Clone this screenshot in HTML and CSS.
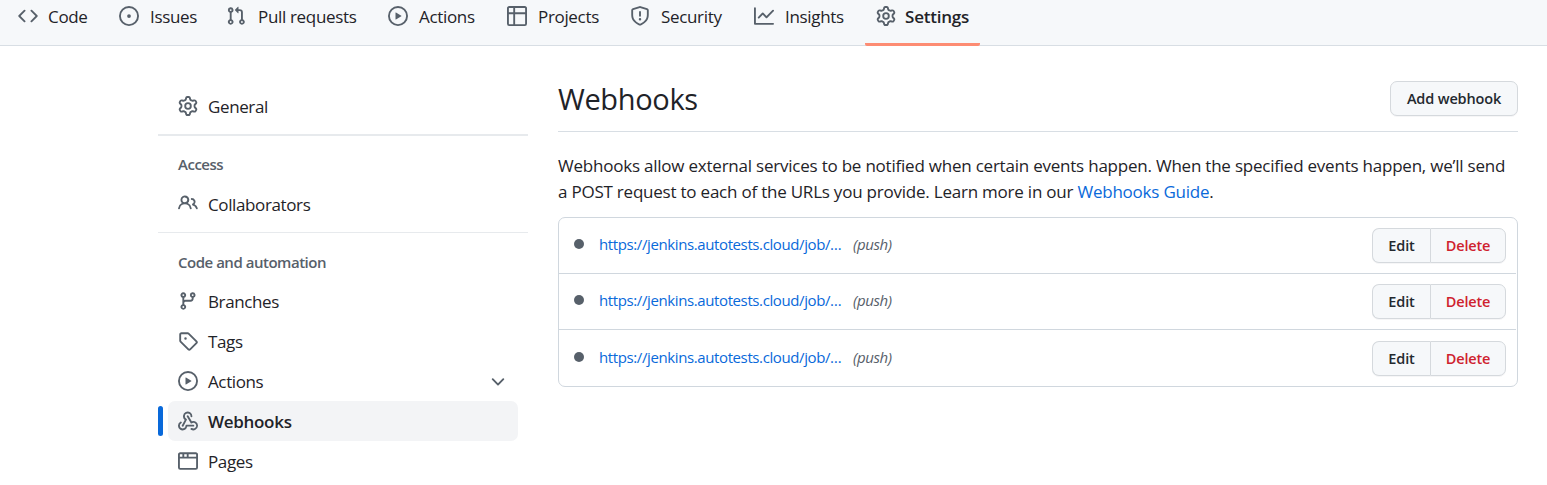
FILE: index.html
```html
<!DOCTYPE html>
<html lang="en">
<head>
<meta charset="utf-8">
<title>Webhooks</title>
<link rel="stylesheet" href="styles.css">
</head>
<body>
<svg class="sprite" aria-hidden="true">
  <symbol id="code" viewBox="0 0 16 16"><path d="m11.28 3.22 4.25 4.25a.75.75 0 0 1 0 1.06l-4.25 4.25a.749.749 0 0 1-1.275-.326.749.749 0 0 1 .215-.734L13.94 8l-3.72-3.72a.749.749 0 0 1 .326-1.275.749.749 0 0 1 .734.215Zm-6.56 0a.751.751 0 0 1 1.042.018.751.751 0 0 1 .018 1.042L2.06 8l3.72 3.72a.749.749 0 0 1-.326 1.275.749.749 0 0 1-.734-.215L.47 8.53a.75.75 0 0 1 0-1.06Z"/></symbol>
  <symbol id="issue" viewBox="0 0 16 16"><path d="M8 9.5a1.5 1.5 0 1 0 0-3 1.5 1.5 0 0 0 0 3Z"/><path d="M8 0a8 8 0 1 1 0 16A8 8 0 0 1 8 0ZM1.5 8a6.5 6.5 0 1 0 13 0 6.5 6.5 0 0 0-13 0Z"/></symbol>
  <symbol id="pull" viewBox="0 0 16 16"><path d="M1.5 3.25a2.25 2.25 0 1 1 3 2.122v5.256a2.251 2.251 0 1 1-1.5 0V5.372A2.25 2.25 0 0 1 1.5 3.25Zm5.677-.177L9.573.677A.25.25 0 0 1 10 .854V2.5h1A2.5 2.5 0 0 1 13.5 5v5.628a2.251 2.251 0 1 1-1.5 0V5a1 1 0 0 0-1-1h-1v1.646a.25.25 0 0 1-.427.177L7.177 3.427a.25.25 0 0 1 0-.354ZM3.75 2.5a.75.75 0 1 0 0 1.5.75.75 0 0 0 0-1.5Zm0 9.5a.75.75 0 1 0 0 1.5.75.75 0 0 0 0-1.5Zm8.25.75a.75.75 0 1 0 1.5 0 .75.75 0 0 0-1.5 0Z"/></symbol>
  <symbol id="play" viewBox="0 0 16 16"><path d="M8 0a8 8 0 1 1 0 16A8 8 0 0 1 8 0ZM1.5 8a6.5 6.5 0 1 0 13 0 6.5 6.5 0 0 0-13 0Zm4.879-2.773 4.264 2.559a.25.25 0 0 1 0 .428l-4.264 2.559A.25.25 0 0 1 6 10.559V5.442a.25.25 0 0 1 .379-.215Z"/></symbol>
  <symbol id="table" viewBox="0 0 16 16"><path d="M0 1.75C0 .784.784 0 1.75 0h12.5C15.216 0 16 .784 16 1.75v12.5A1.75 1.75 0 0 1 14.25 16H1.75A1.75 1.75 0 0 1 0 14.25ZM6.5 6.5v8h7.75a.25.25 0 0 0 .25-.25V6.5Zm8-1.5V1.75a.25.25 0 0 0-.25-.25H6.5V5Zm-13 1.5v7.75c0 .138.112.25.25.25H5v-8ZM5 5V1.5H1.75a.25.25 0 0 0-.25.25V5Z"/></symbol>
  <symbol id="shield" viewBox="0 0 16 16"><path d="M7.467.133a1.748 1.748 0 0 1 1.066 0l5.25 1.68A1.75 1.75 0 0 1 15 3.48V7c0 1.566-.32 3.182-1.303 4.682-.983 1.498-2.585 2.813-5.032 3.855a1.697 1.697 0 0 1-1.33 0c-2.447-1.042-4.049-2.357-5.032-3.855C1.32 10.182 1 8.566 1 7V3.48a1.75 1.75 0 0 1 1.217-1.667Zm.61 1.429a.25.25 0 0 0-.153 0l-5.25 1.68a.25.25 0 0 0-.174.238V7c0 1.358.275 2.666 1.057 3.86.784 1.194 2.121 2.34 4.366 3.297a.196.196 0 0 0 .154 0c2.245-.956 3.582-2.104 4.366-3.298C13.225 9.666 13.5 8.36 13.5 7V3.48a.251.251 0 0 0-.174-.237l-5.25-1.68ZM8.75 4.75v3a.75.75 0 0 1-1.5 0v-3a.75.75 0 0 1 1.5 0ZM9 10.5a1 1 0 1 1-2 0 1 1 0 0 1 2 0Z"/></symbol>
  <symbol id="graph" viewBox="0 0 16 16"><path d="M1.5 1.75V13.5h13.75a.75.75 0 0 1 0 1.5H.75a.75.75 0 0 1-.75-.75V1.75a.75.75 0 0 1 1.5 0Zm14.28 2.53-5.25 5.25a.75.75 0 0 1-1.06 0L7 7.06 4.28 9.78a.751.751 0 0 1-1.042-.018.751.751 0 0 1-.018-1.042l3.25-3.25a.75.75 0 0 1 1.06 0L10 7.94l4.72-4.72a.751.751 0 0 1 1.042.018.751.751 0 0 1 .018 1.042Z"/></symbol>
  <symbol id="gear" viewBox="0 0 16 16"><path d="M8 0a8.2 8.2 0 0 1 .701.031C9.444.095 9.99.645 10.16 1.29l.288 1.107c.018.066.079.158.212.224.231.114.454.243.668.386.123.082.233.09.299.071l1.103-.303c.644-.176 1.392.021 1.82.63.27.385.506.792.704 1.218.315.675.111 1.422-.364 1.891l-.814.806c-.049.048-.098.147-.088.294.016.257.016.515 0 .772-.01.147.038.246.088.294l.814.806c.475.469.679 1.216.364 1.891a7.977 7.977 0 0 1-.704 1.217c-.428.61-1.176.807-1.82.63l-1.102-.302c-.067-.019-.177-.011-.3.071a5.909 5.909 0 0 1-.668.386c-.133.066-.194.158-.211.224l-.29 1.106c-.168.646-.715 1.196-1.458 1.26a8.006 8.006 0 0 1-1.402 0c-.743-.064-1.289-.614-1.458-1.26l-.289-1.106c-.018-.066-.079-.158-.212-.224a5.738 5.738 0 0 1-.668-.386c-.123-.082-.233-.09-.299-.071l-1.103.303c-.644.176-1.392-.021-1.82-.63a8.12 8.12 0 0 1-.704-1.218c-.315-.675-.111-1.422.363-1.891l.815-.806c.05-.048.098-.147.088-.294a6.214 6.214 0 0 1 0-.772c.01-.147-.038-.246-.088-.294l-.815-.806C.635 6.045.431 5.298.746 4.623a7.92 7.92 0 0 1 .704-1.217c.428-.61 1.176-.807 1.82-.63l1.102.302c.067.019.177.011.3-.071.214-.143.437-.272.668-.386.133-.066.194-.158.211-.224l.29-1.106C6.009.645 6.556.095 7.299.03 7.53.01 7.764 0 8 0Zm-.571 1.525c-.036.003-.108.036-.137.146l-.289 1.105c-.147.561-.549.967-.998 1.189-.173.086-.34.183-.5.29-.417.278-.97.423-1.529.27l-1.103-.303c-.109-.03-.175.016-.195.045-.22.312-.412.644-.573.99-.014.031-.021.11.059.19l.815.806c.411.406.562.957.53 1.456a4.709 4.709 0 0 0 0 .582c.032.499-.119 1.05-.53 1.456l-.815.806c-.081.08-.073.159-.059.19.162.346.353.677.573.989.02.03.085.076.195.046l1.102-.303c.56-.153 1.113-.008 1.53.27.161.107.328.204.501.29.447.222.85.629.997 1.189l.289 1.105c.029.109.101.143.137.146a6.6 6.6 0 0 0 1.142 0c.036-.003.108-.036.137-.146l.289-1.105c.147-.561.549-.967.998-1.189.173-.086.34-.183.5-.29.417-.278.97-.423 1.529-.27l1.103.303c.109.029.175-.016.195-.045.22-.313.411-.644.573-.99.014-.031.021-.11-.059-.19l-.815-.806c-.411-.406-.562-.957-.53-1.456a4.709 4.709 0 0 0 0-.582c-.032-.499.119-1.05.53-1.456l.815-.806c.081-.08.073-.159.059-.19a6.464 6.464 0 0 0-.573-.989c-.02-.03-.085-.076-.195-.046l-1.102.303c-.56.153-1.113.008-1.53-.27a4.44 4.44 0 0 0-.501-.29c-.447-.222-.85-.629-.997-1.189l-.289-1.105c-.029-.11-.101-.143-.137-.146a6.6 6.6 0 0 0-1.142 0ZM11 8a3 3 0 1 1-6 0 3 3 0 0 1 6 0ZM9.5 8a1.5 1.5 0 1 0-3.001.001A1.5 1.5 0 0 0 9.5 8Z"/></symbol>
  <symbol id="people" viewBox="0 0 16 16"><path d="M2 5.5a3.5 3.5 0 1 1 5.898 2.549 5.508 5.508 0 0 1 3.034 4.084.75.75 0 1 1-1.482.235 4 4 0 0 0-7.9 0 .75.75 0 0 1-1.482-.236A5.507 5.507 0 0 1 3.102 8.05 3.493 3.493 0 0 1 2 5.5ZM11 4a3.001 3.001 0 0 1 2.22 5.018 5.01 5.01 0 0 1 2.56 3.012.749.749 0 0 1-.885.954.752.752 0 0 1-.549-.514 3.507 3.507 0 0 0-2.522-2.372.75.75 0 0 1-.574-.73v-.352a.75.75 0 0 1 .416-.672A1.5 1.5 0 0 0 11 5.5.75.75 0 0 1 11 4Zm-5.5-.5a2 2 0 1 0-.001 3.999A2 2 0 0 0 5.5 3.5Z"/></symbol>
  <symbol id="branch" viewBox="0 0 16 16"><path d="M9.5 3.25a2.25 2.25 0 1 1 3 2.122V6A2.5 2.5 0 0 1 10 8.5H6a1 1 0 0 0-1 1v1.128a2.251 2.251 0 1 1-1.5 0V5.372a2.25 2.25 0 1 1 1.5 0v1.836A2.493 2.493 0 0 1 6 7h4a1 1 0 0 0 1-1v-.628A2.25 2.25 0 0 1 9.5 3.25Zm-6 0a.75.75 0 1 0 1.5 0 .75.75 0 0 0-1.5 0Zm8.25-.75a.75.75 0 1 0 0 1.5.75.75 0 0 0 0-1.5ZM4.25 12a.75.75 0 1 0 0 1.5.75.75 0 0 0 0-1.5Z"/></symbol>
  <symbol id="tag" viewBox="0 0 16 16"><path d="M1 7.775V2.75C1 1.784 1.784 1 2.75 1h5.025c.464 0 .91.184 1.238.513l6.25 6.25a1.75 1.75 0 0 1 0 2.474l-5.026 5.026a1.75 1.75 0 0 1-2.474 0l-6.25-6.25A1.752 1.752 0 0 1 1 7.775Zm1.5 0c0 .066.026.13.073.177l6.25 6.25a.25.25 0 0 0 .354 0l5.025-5.025a.25.25 0 0 0 0-.354l-6.25-6.25a.25.25 0 0 0-.177-.073H2.75a.25.25 0 0 0-.25.25ZM6 5a1 1 0 1 1 0 2 1 1 0 0 1 0-2Z"/></symbol>
  <symbol id="hook" viewBox="0 0 16 16"><path d="M5.5 4.25a2.25 2.25 0 0 1 4.5 0 .75.75 0 0 0 1.5 0 3.75 3.75 0 1 0-6.14 2.889l-2.272 4.258a.75.75 0 0 0 1.324.706L7 7.25a.75.75 0 0 0-.309-1.015A2.25 2.25 0 0 1 5.5 4.25Z"/><path d="M7.364 3.607a.75.75 0 0 1 1.03.257l2.608 4.349a3.75 3.75 0 1 1-.628 6.785.75.75 0 0 1 .752-1.299 2.25 2.25 0 1 0-.033-3.88.75.75 0 0 1-1.03-.256L7.107 4.636a.75.75 0 0 1 .257-1.03Z"/><path d="M2.9 8.776A.75.75 0 0 1 2.625 9.8 2.25 2.25 0 1 0 6 11.75a.75.75 0 0 1 .75-.751h5.5a.75.75 0 0 1 0 1.5H7.425a3.751 3.751 0 1 1-5.55-3.998.75.75 0 0 1 1.024.274Z"/></symbol>
  <symbol id="browser" viewBox="0 0 16 16"><path d="M0 2.75C0 1.784.784 1 1.75 1h12.5c.966 0 1.75.784 1.75 1.75v10.5A1.75 1.75 0 0 1 14.25 15H1.75A1.75 1.75 0 0 1 0 13.25ZM14.5 6h-13v7.25c0 .138.112.25.25.25h12.5a.25.25 0 0 0 .25-.25Zm-6-3.5v2h6V2.75a.25.25 0 0 0-.25-.25ZM5 2.5v2h2v-2Zm-3.25 0a.25.25 0 0 0-.25.25V4.5h2v-2Z"/></symbol>
  <symbol id="chevron" viewBox="0 0 16 16"><path d="M12.78 5.22a.749.749 0 0 1 0 1.06l-4.25 4.25a.749.749 0 0 1-1.06 0L3.22 6.28a.749.749 0 1 1 1.06-1.06L8 8.939l3.72-3.719a.749.749 0 0 1 1.06 0Z"/></symbol>
  <symbol id="dot" viewBox="0 0 16 16"><path d="M8 4a4 4 0 1 1 0 8 4 4 0 0 1 0-8Z"/></symbol>
</svg>

<nav class="topnav">
  <a class="tab"><svg class="icon"><use href="#code"/></svg><span class="label">Code</span></a>
  <a class="tab"><svg class="icon"><use href="#issue"/></svg><span class="label">Issues</span></a>
  <a class="tab tab-pull"><svg class="icon"><use href="#pull"/></svg><span class="label">Pull requests</span></a>
  <a class="tab"><svg class="icon"><use href="#play"/></svg><span class="label">Actions</span></a>
  <a class="tab"><svg class="icon"><use href="#table"/></svg><span class="label">Projects</span></a>
  <a class="tab"><svg class="icon"><use href="#shield"/></svg><span class="label">Security</span></a>
  <a class="tab"><svg class="icon"><use href="#graph"/></svg><span class="label">Insights</span></a>
  <a class="tab tab-current"><svg class="icon"><use href="#gear"/></svg><span class="label">Settings</span></a>
</nav>

<div class="layout">
  <aside class="sidebar">
    <a class="item"><svg class="icon"><use href="#gear"/></svg><span class="label">General</span></a>
    <div class="rule rule-thick"></div>
    <h3 class="group group-access">Access</h3>
    <a class="item"><svg class="icon icon-people"><use href="#people"/></svg><span class="label">Collaborators</span></a>
    <div class="rule"></div>
    <h3 class="group">Code and automation</h3>
    <a class="item"><svg class="icon"><use href="#branch"/></svg><span class="label">Branches</span></a>
    <a class="item"><svg class="icon"><use href="#tag"/></svg><span class="label">Tags</span></a>
    <a class="item"><svg class="icon"><use href="#play"/></svg><span class="label">Actions</span><svg class="icon chevron"><use href="#chevron"/></svg></a>
    <a class="item item-current"><svg class="icon"><use href="#hook"/></svg><span class="label">Webhooks</span></a>
    <a class="item"><svg class="icon"><use href="#browser"/></svg><span class="label">Pages</span></a>
  </aside>

  <main class="content">
    <header class="head">
      <h1 class="title">Webhooks</h1>
      <button class="btn btn-add">Add webhook</button>
    </header>
    <p class="intro"><span class="line">Webhooks allow external services to be notified when certain events happen. When the specified events happen, we’ll send</span> <span class="line">a POST request to each of the URLs you provide. Learn more in our <a class="link">Webhooks Guide</a>.</span></p>
    <ul class="hooks">
      <li class="hook"><svg class="icon dot"><use href="#dot"/></svg><a class="link url">https://jenkins.autotests.cloud/job/…</a><em class="event">(push)</em><div class="actions"><button class="btn btn-edit">Edit</button><button class="btn btn-delete">Delete</button></div></li>
      <li class="hook"><svg class="icon dot"><use href="#dot"/></svg><a class="link url">https://jenkins.autotests.cloud/job/…</a><em class="event">(push)</em><div class="actions"><button class="btn btn-edit">Edit</button><button class="btn btn-delete">Delete</button></div></li>
      <li class="hook"><svg class="icon dot"><use href="#dot"/></svg><a class="link url">https://jenkins.autotests.cloud/job/…</a><em class="event">(push)</em><div class="actions"><button class="btn btn-edit">Edit</button><button class="btn btn-delete">Delete</button></div></li>
    </ul>
  </main>
</div>
</body>
</html>
```
FILE: styles.css
```css
* { box-sizing: border-box; }

body {
  margin: 0;
  height: 485px;
  overflow: hidden;
  background: #fff;
  color: #1f2328;
  font-family: "Open Sans", "Noto Sans", sans-serif;
  font-size: 17px;
  letter-spacing: -0.38px;
}

.sprite { display: none; }

.icon {
  flex: none;
  width: 20px;
  height: 20px;
  fill: #57606a;
}

.label { white-space: nowrap; }

.topnav {
  display: grid;
  grid-template-columns: 101px 107px 162px 119px 123px 124px 111px 115px;
  height: 46px;
  padding-left: 18px;
  background: #f6f8fa;
  border-bottom: 1px solid #d8dee4;
  letter-spacing: -0.33px;
}

.tab {
  display: flex;
  gap: 11px;
  height: 46px;
  padding-top: 6px;
  line-height: 22px;
}

.tab:first-child { gap: 10px; }
.tab-pull { gap: 12px; }

.tab-current {
  gap: 9px;
  padding-left: 11px;
  border-bottom: 3px solid #fd8c73;
  border-radius: 2px;
  font-weight: 600;
  letter-spacing: -0.22px;
}

.layout {
  display: flex;
  gap: 30px;
  padding: 35px 29px 0 158px;
}

.sidebar { width: 370px; }

.item {
  display: flex;
  align-items: center;
  gap: 10px;
  height: 40px;
  margin: 0 10px;
  padding: 0 10px;
  border-radius: 7px;
}

.sidebar > .item:first-child { margin-top: 5px; }

.icon-people { margin-top: -3px; }

.chevron {
  margin-top: 2px;
  margin-left: auto;
}

.rule {
  height: 1px;
  margin-top: 8px;
  background: #e7eaed;
}

.rule-thick { height: 2px; }

.group {
  height: 48px;
  margin: 0;
  padding: 18px 20px 0;
  color: #57606a;
  font-size: 15px;
  font-weight: 600;
  line-height: 22px;
  letter-spacing: -0.48px;
}

.group-access { padding-top: 17px; }

.item-current {
  position: relative;
  background: #f3f4f6;
  font-weight: 600;
  letter-spacing: -0.3px;
}

.item-current::before {
  content: "";
  position: absolute;
  left: -10px;
  top: 5px;
  width: 5px;
  height: 30px;
  border-radius: 3px;
  background: #0969da;
}

.content { width: 960px; }

.head {
  display: flex;
  justify-content: space-between;
  align-items: flex-start;
  height: 51px;
  border-bottom: 1px solid #d8dee4;
}

.title {
  margin: 0;
  font-size: 29px;
  font-weight: 400;
  line-height: 36px;
  letter-spacing: -0.35px;
}

.btn {
  height: 35px;
  padding: 0;
  border: 1px solid #d5d9dd;
  border-radius: 7px;
  background: #f6f8fa;
  box-shadow: 0 1px 0 rgba(31, 35, 40, 0.04);
  color: #24292f;
  font-family: inherit;
  font-size: 14.5px;
  font-weight: 600;
  letter-spacing: -0.15px;
}

.btn-add { width: 128px; }

.intro {
  margin: 21px 0 12px;
  line-height: 26px;
  letter-spacing: -0.222px;
}

.line {
  display: block;
  white-space: nowrap;
}

.link { color: #0969da; }

.hooks {
  margin: 0;
  padding: 0 1px 0 0;
  border: 1px solid #d0d7de;
  border-radius: 7px;
  list-style: none;
}

.hook {
  display: flex;
  align-items: center;
  height: 56px;
  padding: 0 10px;
  font-size: 15px;
}

.hook:last-child { padding-top: 1px; }
.hook:not(:last-child) { border-bottom: 1px solid #d0d7de; }

.dot { margin-top: -3px; }

.url {
  flex: none;
  width: 264px;
  padding: 0 0 3px 10px;
  white-space: nowrap;
  letter-spacing: -0.39px;
}

.event {
  padding-bottom: 3px;
  color: #57606a;
}

.actions {
  display: flex;
  margin-left: auto;
}

.btn-edit {
  width: 58px;
  border-right: 0;
  border-radius: 7px 0 0 7px;
}

.btn-delete {
  width: 76px;
  border-radius: 0 7px 7px 0;
  color: #cf222e;
}
```
